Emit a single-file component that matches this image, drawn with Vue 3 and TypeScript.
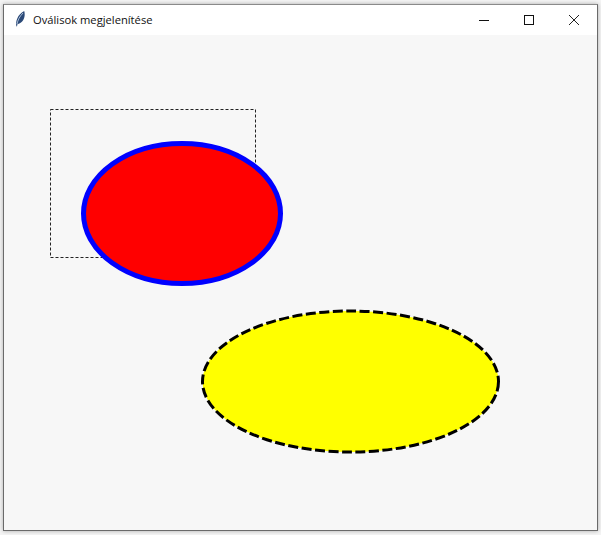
<script setup lang="ts">
// Ablak címsorral és egy rajzvászonnal
const title = 'Oválisok megjelenítése'
</script>

<template>
  <div class="desktop">
    <div class="window">
      <header class="titlebar">
        <svg class="feather" width="16" height="20" viewBox="0 0 16 20">
          <path d="M4.4 16.2 C3.4 11.5 5.5 4.5 12.2 1 C13.4 5 12.5 10 9 12.6 C7.4 13.8 6 14 5.4 14.2 L5 16.4 Z" fill="#2c4a78" />
          <path d="M5 14 C5.8 10 7.6 6.5 11 3" fill="none" stroke="#b9cbe2" stroke-width="0.9" />
        </svg>
        <span class="title">{{ title }}</span>
        <div class="controls">
          <button class="control">
            <svg width="12" height="12" viewBox="0 0 12 12"><path d="M1 6.5H11" stroke="#111" fill="none" /></svg>
          </button>
          <button class="control">
            <svg width="12" height="12" viewBox="0 0 12 12"><rect x="1.5" y="1.5" width="9" height="9" stroke="#111" fill="none" /></svg>
          </button>
          <button class="control">
            <svg width="12" height="12" viewBox="0 0 12 12"><path d="M1 1L11 11M11 1L1 11" stroke="#222" fill="none" /></svg>
          </button>
        </div>
      </header>
      <svg class="canvas" width="593" height="495" viewBox="4 35 593 495">
        <rect x="50.5" y="109.5" width="205" height="148" fill="none" stroke="#222" stroke-dasharray="3 2" />
        <ellipse cx="182" cy="213.5" rx="98.5" ry="70" fill="#ff0000" stroke="#0000ff" stroke-width="5" />
        <ellipse cx="350.5" cy="381.5" rx="148" ry="70.5" fill="#ffff00" stroke="#000" stroke-width="3" stroke-dasharray="10 3.5" />
      </svg>
    </div>
  </div>
</template>

<style scoped>
.desktop {
  width: 601px;
  height: 535px;
  box-sizing: border-box;
  padding: 4px 3px;
  background: #f4f4f4;
  overflow: hidden;
}
.window {
  width: 595px;
  height: 527px;
  box-sizing: border-box;
  border: 1px solid #6a6a6a;
  border-top-color: #8a8a8a;
  background: #f7f7f7;
  display: flex;
  flex-direction: column;
  box-shadow: 0 0 4px rgba(0, 0, 0, 0.3);
}
.titlebar {
  height: 30px;
  flex: none;
  background: #fff;
  display: flex;
  align-items: center;
  padding-left: 8px;
}
.feather {
  flex: none;
}
.title {
  margin-left: 5px;
  padding-bottom: 2px;
  font-family: "Open Sans", "Noto Sans", sans-serif;
  font-size: 11.2px;
  color: #111;
}
.controls {
  margin-left: auto;
  margin-right: 1px;
  display: flex;
}
.control {
  width: 45px;
  height: 30px;
  border: 0;
  padding: 0;
  background: transparent;
  display: flex;
  align-items: center;
  justify-content: center;
}
.canvas {
  display: block;
  flex: none;
}
</style>
